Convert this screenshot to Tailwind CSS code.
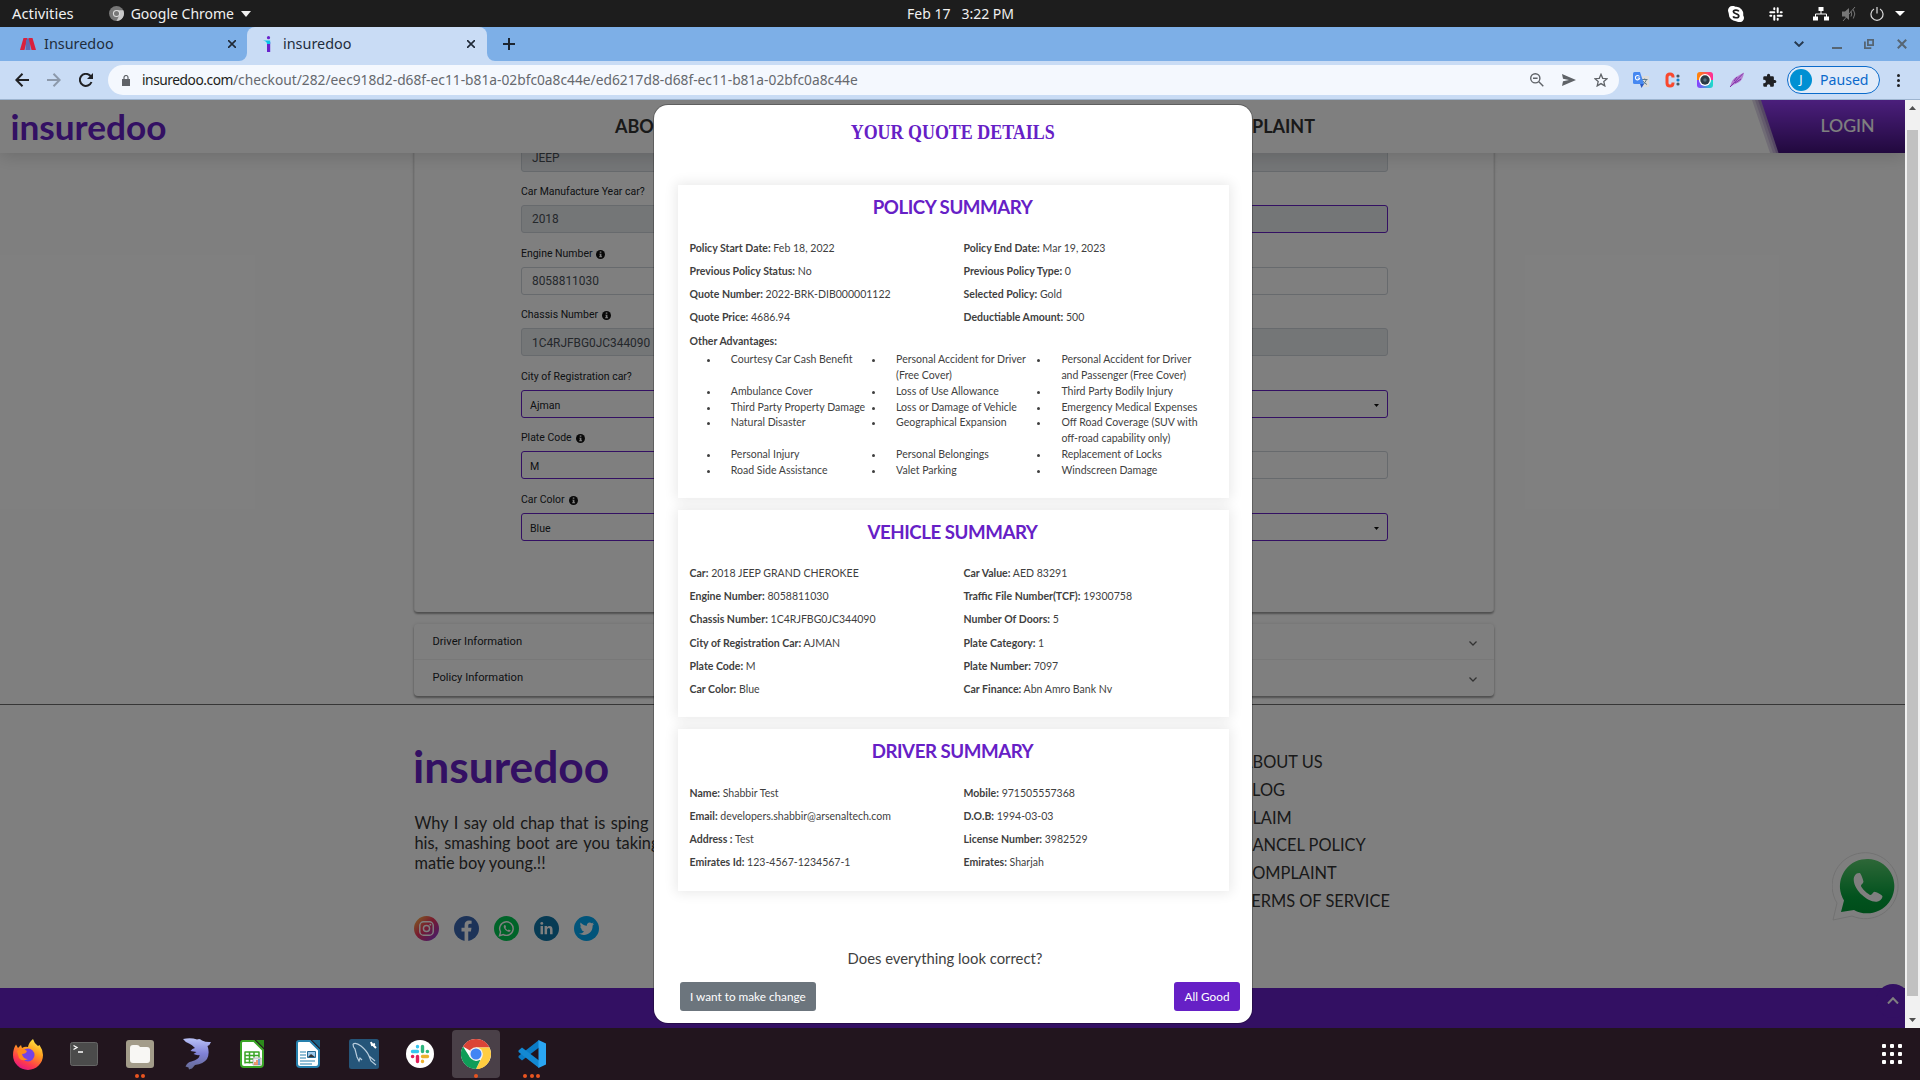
<!DOCTYPE html>
<html lang="en">
<head>
<meta charset="utf-8">
<title>insuredoo</title>
<script src="https://cdn.jsdelivr.net/npm/@tailwindcss/browser@4"></script>
</head>
<body class="flex h-[1080px] w-[1920px] flex-col overflow-hidden bg-[#22151e] font-['Noto_Sans',sans-serif]">

<svg class="hidden">
  <symbol id="info" viewBox="0 0 16 16"><circle cx="8" cy="8" r="8" fill="#111"/><path d="M6.700 2.500h2.800v2.400H6.700zM6 6.500h3.600v4.800h1.200v1.700H5.600v-1.700h1.200V8.200H6z" fill="#fff"/></symbol>
  <symbol id="chrome" viewBox="0 0 48 48"><circle cx="24" cy="24" r="24" fill="#fff"/><path d="M24 24 3.200 12A24 24 0 0 1 44.800 12L45.500 13.500H24z" fill="#db4437"/><path d="M24 13.500h21.600A24 24 0 0 1 24 48l9.500-19z" fill="#ffcd40"/><path d="M3.200 12 14.500 29.500 24 34.500l7 -1L24 48A24 24 0 0 1 3.200 12z" fill="#0f9d58"/><circle cx="24" cy="24" r="11" fill="#f1f1f1"/><circle cx="24" cy="24" r="8.800" fill="#4285f4"/></symbol>
  <symbol id="wa" viewBox="0 0 24 24"><path d="M6.600 3.100c-.9.200-2.400 1.600-2.300 4 .1 3.300 2.600 6.800 5 9 2.400 2.300 6.300 4.500 9.200 3.900 1.600-.4 2.900-1.900 2.900-3.200 0-.7-4-2.700-4.700-2.700-.9 0-1.600 2-2.400 2-1 0-5.700-4.200-5.700-5.500 0-.7 1.500-1.500 1.500-2.400 0-.6-1.500-5.200-2.300-5.200z"/></symbol>
</svg>

<!-- Desktop panel -->
<div class="flex h-[27px] shrink-0 items-center bg-[#1d1d1d] text-[14px] leading-none text-[#f0f0f0]">
  <div class="flex w-[907px] items-center pl-3">
    <span class="text-[14.800px]">Activities</span>
    <svg class="ml-[35px] h-[15px] w-[15px]" viewBox="0 0 48 48"><circle cx="24" cy="24" r="24" fill="#777"/><path d="M24 13.500h21.600A24 24 0 0 1 24 48l9.500-19z" fill="#c8c8c8"/><circle cx="24" cy="24" r="11.500" fill="#ddd"/><circle cx="24" cy="24" r="8" fill="#777"/></svg>
    <span class="ml-[7px]">Google Chrome</span>
    <svg class="ml-[7px] h-[6px] w-[10px]" viewBox="0 0 10 6"><path d="M0 0h10L5 6z" fill="#f0f0f0"/></svg>
  </div>
  <div class="flex w-[107px] justify-between"><span>Feb 17</span><span>3:22 PM</span></div>
  <div class="flex flex-1 items-center justify-end">
    <svg class="mr-[25px] h-4 w-4" viewBox="0 0 16 16"><path d="M4.500 0C7 0 7 .8 8.500.8A7.200 7.200 0 0 1 15.200 9c0 1 .8 1.500.8 3a4 4 0 0 1-4.500 4C9.500 16 9 15.200 8 15.200A7.200 7.200 0 0 1 .8 8C.8 6.500 0 6 0 4.300A4.300 4.300 0 0 1 4.500 0z" fill="#fff"/><path d="M10.800 5.300C10 3.700 5.400 3.600 5.400 5.800c0 2.400 5.400 1.500 5.400 4.100 0 2.400-5 2.300-5.700.5" fill="none" stroke="#1d1d1d" stroke-width="1.700"/></svg>
    <svg class="mr-[30px] h-[14px] w-[14px]" viewBox="0 0 14 14" fill="none" stroke="#fff" stroke-width="2" stroke-linecap="round"><path d="M1.300 5.300h4M5.300 1.300v1M8.700 1.300v4M11.700 5.300h1M8.700 8.700h4M8.700 11.700v1M5.300 8.700v4M1.300 8.700h1"/></svg>
    <svg class="mr-[13px] h-[14px] w-4" viewBox="0 0 16 14"><path d="M5.500 0h5v4h-5zM0 9.500h5v4H0zM11 9.500h5v4h-5z" fill="#fff"/><path d="M8 4v3M2.500 10V7h11v3" fill="none" stroke="#fff"/></svg>
    <svg class="mr-[13px] h-[14px] w-[15px]" viewBox="0 0 15 14"><path d="M0 4.500h3L7 1v12L3 9.500H0z" fill="#777"/><path d="M9 4.500q1.500 2.500 0 5M11.300 2.500q3 4.500 0 9M1 14 13 0" fill="none" stroke="#777"/></svg>
    <svg class="mr-[11px] h-[14px] w-[14px]" viewBox="0 0 14 14" fill="none" stroke="#ddd" stroke-width="1.200"><path d="M4 2.100a6 6 0 1 0 6 0M7 0v6.500"/></svg>
    <svg class="mr-[15px] h-[5px] w-[10px]" viewBox="0 0 10 5"><path d="M0 0h10L5 5z" fill="#fff"/></svg>
  </div>
</div>

<!-- Browser tabs -->
<div class="flex h-[34px] shrink-0 bg-[#7dafe7] text-[14.400px] text-[#1f2d3d]">
  <div class="flex w-[247px] items-center pl-5">
    <svg class="h-3 w-4" viewBox="0 0 16 12"><path d="M3.500 0h4L4.500 12H0z" fill="#d9203c"/><path d="M6 2.500 8 0l2 2.500L10.500 12H5.500z" fill="#5a6db5"/><path d="M8.500 0h4L16 12h-4.500z" fill="#d9203c"/></svg>
    <span class="ml-2 flex-1">Insuredoo</span>
    <svg class="mr-[11px] h-2 w-2" viewBox="0 0 8 8"><path d="m0 0 8 8M8 0 0 8" stroke="#1f2937" stroke-width="1.600"/></svg>
  </div>
  <div class="relative flex w-60 items-center rounded-t-lg bg-[#c9dcf5] pl-4">
    <svg class="absolute bottom-0 -left-2 h-2 w-2" viewBox="0 0 8 8"><path d="M8 0v8H0a8 8 0 0 0 8-8z" fill="#c9dcf5"/></svg>
    <svg class="absolute -right-2 bottom-0 h-2 w-2" viewBox="0 0 8 8"><path d="M0 0v8h8a8 8 0 0 1-8-8z" fill="#c9dcf5"/></svg>
    <svg class="h-4 w-[8px]" viewBox="0 0 8 16"><circle cx="5.500" cy="1.700" r="1.600" fill="#6a22cc"/><path d="M4 6h3.200v10H4z" fill="#6a22cc"/><path d="M0 4.500h7.200V8H4Q4 5 0 4.500z" fill="#0cc5e8"/></svg>
    <span class="ml-3 flex-1">insuredoo</span>
    <svg class="mr-3 h-2 w-2" viewBox="0 0 8 8"><path d="m0 0 8 8M8 0 0 8" stroke="#1f2937" stroke-width="1.600"/></svg>
  </div>
  <div class="flex flex-1 items-center pl-4">
    <svg class="h-3 w-3" viewBox="0 0 12 12"><path d="M6 0v12M0 6h12" stroke="#1c2530" stroke-width="2"/></svg>
    <svg class="mr-[28px] ml-auto h-[6px] w-[10px]" viewBox="0 0 10 6"><path d="m.7.7 4.300 4.200L9.300.7" fill="none" stroke="#26384d" stroke-width="1.900"/></svg>
    <div class="mt-2 mr-[22px] h-[2px] w-[10px] bg-[#566573]"></div>
    <svg class="mr-[23px] h-[10px] w-[10px]" viewBox="0 0 10 10" fill="none" stroke="#566573" stroke-width="1.800"><path d="M3.900.9h5.200v5.200H3.900zM.9 2.500v6.600h6.400"/></svg>
    <svg class="mr-[13px] h-[10px] w-[10px]" viewBox="0 0 10 10"><path d="m.8.8 8.400 8.400M9.200.8.8 9.200" stroke="#566573" stroke-width="2"/></svg>
  </div>
</div>

<!-- Browser toolbar -->
<div class="flex h-[39px] shrink-0 items-center border-b border-[#9db4cf] bg-[#c9dcf5]">
  <div class="flex w-[108px] items-center pl-[6px]">
    <div class="flex w-8 justify-center"><svg class="h-[14px] w-[14px]" viewBox="0 0 14 14" fill="none" stroke="#202124" stroke-width="2"><path d="M14 7H1.500M7.500.8 1.300 7l6.200 6.200"/></svg></div>
    <div class="flex w-8 justify-center"><svg class="h-[14px] w-[14px]" viewBox="0 0 14 14" fill="none" stroke="#8c99ab" stroke-width="2"><path d="M0 7h12.500M6.500.8 12.700 7l-6.200 6.200"/></svg></div>
    <div class="flex w-8 justify-center"><svg class="h-[14px] w-[14px]" viewBox="0 0 14 14" fill="none" stroke="#202124" stroke-width="2"><path d="M12.500 9A6 6 0 1 1 11.300 2.800L12.500 4"/><path d="M14 0v6H8z" fill="#202124" stroke="none"/></svg></div>
  </div>
  <div class="flex h-[30px] w-[1511px] items-center rounded-full bg-[#f4f8fe] pr-[2px] pl-[14px]">
    <svg class="h-[11px] w-2" viewBox="0 0 8 11"><path d="M0 4h8v7H0z" fill="#5f6368"/><path d="M2 5V2.500a2 2 0 0 1 4 0V5" fill="none" stroke="#5f6368" stroke-width="1.200"/></svg>
    <div class="ml-3 flex-1 text-[13.770px] whitespace-nowrap text-[#66696e]"><span class="tracking-[-0.460px] text-[#1d1e20]">insuredoo.com</span><span>/checkout/282/eec918d2-d68f-ec11-b81a-02bfc0a8c44e/ed6217d8-d68f-ec11-b81a-02bfc0a8c44e</span></div>
    <div class="flex w-8 justify-center"><svg class="h-[14px] w-[14px]" viewBox="0 0 14 14" fill="none" stroke="#5f6368" stroke-width="1.400"><circle cx="5.300" cy="5.300" r="4.600"/><path d="M8.800 8.800 13.300 13.300M3 5.300h4.600"/></svg></div>
    <div class="flex w-8 justify-center"><svg class="h-3 w-[14px]" viewBox="0 0 14 12"><path d="M0 0 14 6 0 12l1-4.800L7 6 1 4.800z" fill="#5f6368"/></svg></div>
    <div class="flex w-8 justify-center"><svg class="h-[14px] w-[14px]" viewBox="0 0 14 14"><path d="m7 1.300 1.700 4 4.400.4-3.300 2.900 1 4.300L7 10.600l-3.800 2.300 1-4.300L.9 5.700l4.400-.4z" fill="none" stroke="#5f6368" stroke-width="1.300"/></svg></div>
  </div>
  <div class="flex flex-1 items-center pl-[6px]">
    <div class="flex w-8 justify-center"><svg class="h-4 w-4" viewBox="0 0 16 16"><path d="M6 4h10v11H9z" fill="#dcdcdc"/><path d="M9 7.500h5.500M11.700 6.500v1.200M13.500 7.500q-1 3.500-4 5M10 9q1.500 2.500 4 3.500" stroke="#607d8b" fill="none"/><path d="M0 1.500Q0 0 1.500 0H7l4 12H1.500Q0 12 0 10.500z" fill="#4688f1"/><path d="M7 12h4l-2.500 4z" fill="#2b59c3"/><path d="M6.800 6H4.600M6.500 4.500A2.200 2.200 0 1 0 6.800 6" stroke="#fff" stroke-width="1.100" fill="none"/></svg></div>
    <div class="flex w-8 justify-center"><svg class="h-4 w-4" viewBox="0 0 16 16"><path d="M8 5.500V5c0-4-6-4-6 0v6c0 4 6 4 6 0v-.5" stroke="#f9482e" stroke-width="3" fill="none"/><circle cx="13" cy="4" r="1.600" fill="#455a64"/><circle cx="13" cy="8" r="1.600" fill="#1182d0"/><circle cx="13" cy="12" r="1.600" fill="#455a64"/></svg></div>
    <div class="flex w-8 justify-center"><svg class="h-4 w-4" viewBox="0 0 16 16"><defs><linearGradient id="cam1" x2="1"><stop stop-color="#ff8a00"/><stop offset="1" stop-color="#ff2a9d"/></linearGradient><linearGradient id="cam2" x2="1"><stop stop-color="#8b3dff"/><stop offset="1" stop-color="#19e0c8"/></linearGradient></defs><path d="M0 8V3q0-3 3-3h10q3 0 3 3v5z" fill="url(#cam1)"/><path d="M0 8h16v5q0 3-3 3H3q-3 0-3-3z" fill="url(#cam2)"/><circle cx="8" cy="8" r="6" fill="#fff"/><circle cx="8" cy="8" r="4.700" fill="#2b3b45"/><circle cx="8" cy="8" r="1.700" fill="#567080"/></svg></div>
    <div class="flex w-8 justify-center"><svg class="h-4 w-4" viewBox="0 0 16 16"><path d="M1 15Q3 7 7 5l8-4.500Q14 8 9.500 10.500 5 12 1 15z" fill="#b57fd0"/><path d="M1 15 14 1.500M5 9l3-4M6 11l6-4" stroke="#7e2fa8" fill="none"/></svg></div>
    <div class="flex w-8 justify-center"><svg class="h-[15px] w-[15px]" viewBox="0 0 24 24"><path d="M20.500 11H19V7a2 2 0 0 0-2-2h-4V3.500a2.500 2.500 0 0 0-5 0V5H4a2 2 0 0 0-2 2v3.800h1.500a2.700 2.700 0 0 1 0 5.400H2V20a2 2 0 0 0 2 2h3.800v-1.500a2.700 2.700 0 0 1 5.400 0V22H17a2 2 0 0 0 2-2v-4h1.500a2.500 2.500 0 0 0 0-5z" fill="#202124"/></svg></div>
    <div class="ml-[2px] flex h-7 w-[93px] items-center rounded-full border border-[#0b6bcb] bg-[#e1ebf9] pl-[2px]">
      <div class="flex h-[22px] w-[22px] items-center justify-center rounded-full bg-[#0090d3] text-[12px] text-white">J</div>
      <span class="ml-2 text-[14.100px] text-[#0b69cb]">Paused</span>
    </div>
    <div class="ml-[17px] flex flex-col gap-[2px]"><i class="h-[3px] w-[3px] rounded-full bg-[#202124]"></i><i class="h-[3px] w-[3px] rounded-full bg-[#202124]"></i><i class="h-[3px] w-[3px] rounded-full bg-[#202124]"></i></div>
  </div>
</div>

<!-- Web page -->
<div class="flex h-[928px] shrink-0">
  <div class="relative flex w-[1905px] flex-col overflow-hidden bg-white font-['Lato',sans-serif]">
    <header class="relative z-10 flex h-[53px] shrink-0 items-center bg-white shadow-[0_3px_18px_rgba(0,0,0,0.16)]">
      <div class="w-[615px] shrink-0 pb-[2px] pl-[10.500px] text-[35.200px] leading-[50px] font-bold text-[#6620c6]">insuredoo</div>
      <nav class="flex w-[700px] shrink-0 justify-between text-[18px] font-bold text-[#333]"><span>ABOUT US</span><span>COMPLAINT</span></nav>
      <div class="relative ml-auto flex h-full w-[153px] items-center justify-center pl-[38px] text-[17.700px] font-medium text-white">
        <svg class="absolute inset-0 h-[53px] w-[153px]" viewBox="0 0 153 53"><defs><linearGradient id="lg" x2="0" y2="1"><stop stop-color="#963ef8"/><stop offset="1" stop-color="#43127c"/></linearGradient></defs><path d="M0 0h153v53H18z" fill="#6a3a9a" opacity=".2"/><path d="M3 0h150v53H21z" fill="#6a3a9a" opacity=".2"/><path d="M6 0h147v53H24z" fill="#6a3a9a" opacity=".3"/><path d="M9 0h144v53H26.500z" fill="url(#lg)"/></svg>
        <span class="relative">LOGIN</span>
      </div>
    </header>

    <main class="flex flex-col items-center pl-[3px]">
      <section class="-mt-[9.500px] h-[468.500px] w-[1080px] rounded-b border-x border-[#f0f0f0] pr-[105px] pl-[106px] font-['Roboto',sans-serif] text-[11.900px] leading-4 text-[#495057] shadow-[0_2px_2px_rgba(0,0,0,0.35),0_0_4px_rgba(0,0,0,0.12)]">
        <div class="grid grid-cols-2 gap-x-[30px]">
          <div>
            <div class="flex h-7 items-center rounded-[3px] border border-[#ced4da] bg-[#e9ecef] px-[10px]">JEEP</div>
            <div class="h-[33.550px] pt-3 text-[10.480px] text-[#212529]">Car Manufacture Year car?</div>
            <div class="flex h-7 items-center rounded-[3px] border border-[#ced4da] bg-[#e9ecef] px-[10px]">2018</div>
            <div class="flex h-[33.550px] gap-1 pt-[12.500px] text-[10.480px] text-[#212529]">Engine Number <svg class="mt-[4px] h-[9px] w-[9px]"><use href="#info"/></svg></div>
            <div class="flex h-7 items-center rounded-[3px] border border-[#ced4da] px-[10px]">8058811030</div>
            <div class="flex h-[33.550px] gap-1 pt-3 text-[10.480px] text-[#212529]">Chassis Number <svg class="mt-[4px] h-[9px] w-[9px]"><use href="#info"/></svg></div>
            <div class="flex h-7 items-center rounded-[3px] border border-[#ced4da] bg-[#e9ecef] px-[10px] pt-px">1C4RJFBG0JC344090</div>
            <div class="h-[33.550px] pt-[12.500px] text-[10.480px] text-[#212529]">City of Registration car?</div>
            <div class="flex h-7 items-center rounded-[3px] border border-[#6620c6] px-2 pt-1 text-[10.600px] text-[#212529]">Ajman</div>
            <div class="flex h-[33.550px] gap-1 pt-3 text-[10.480px] text-[#212529]">Plate Code <svg class="mt-[4px] h-[9px] w-[9px]"><use href="#info"/></svg></div>
            <div class="flex h-7 items-center rounded-[3px] border border-[#6620c6] px-2 pt-[3px] text-[10.600px] text-[#212529]">M</div>
            <div class="flex h-[33.550px] gap-1 pt-[12.500px] text-[10.480px] text-[#212529]">Car Color <svg class="mt-[4px] h-[9px] w-[9px]"><use href="#info"/></svg></div>
            <div class="flex h-7 items-center rounded-[3px] border border-[#6620c6] px-2 pt-1 text-[10.600px] text-[#212529]">Blue</div>
          </div>
          <div class="flex flex-col gap-[33.550px]">
            <div class="h-7 rounded-[3px] border border-[#ced4da] bg-[#e9ecef]"></div>
            <div class="h-7 rounded-[3px] border border-[#6620c6] bg-[#e9ecef]"></div>
            <div class="h-7 rounded-[3px] border border-[#ced4da]"></div>
            <div class="h-7 rounded-[3px] border border-[#ced4da] bg-[#e9ecef]"></div>
            <div class="flex h-7 items-center justify-end rounded-[3px] border border-[#6620c6] pt-[3px] pr-2"><svg class="h-[3px] w-[5px]" viewBox="0 0 5 3"><path d="M0 0h5L2.500 3z" fill="#111"/></svg></div>
            <div class="h-7 rounded-[3px] border border-[#ced4da]"></div>
            <div class="flex h-7 items-center justify-end rounded-[3px] border border-[#6620c6] pt-[3px] pr-2"><svg class="h-[3px] w-[5px]" viewBox="0 0 5 3"><path d="M0 0h5L2.500 3z" fill="#111"/></svg></div>
          </div>
        </div>
      </section>
      <section class="mt-3 w-[1080px] rounded font-['Roboto',sans-serif] text-[11.170px] text-[#212529] shadow-[0_2px_2px_rgba(0,0,0,0.35),0_0_4px_rgba(0,0,0,0.12)]">
        <div class="flex h-9 items-center justify-between border-b border-[#f0f0f0] pt-[1px] pr-[17px] pl-[18.500px]">Driver Information<svg class="mt-[2px] h-[5px] w-2" viewBox="0 0 8 5"><path d="m.5.5 3.500 3.500L7.500.5" fill="none" stroke="#666" stroke-width="1.300"/></svg></div>
        <div class="flex h-9 items-center justify-between pt-[1px] pr-[17px] pl-[18.500px]">Policy Information<svg class="mt-[2px] h-[5px] w-2" viewBox="0 0 8 5"><path d="m.5.5 3.500 3.500L7.500.5" fill="none" stroke="#666" stroke-width="1.300"/></svg></div>
      </section>
    </main>

    <footer class="mt-2 flex h-[324px] shrink-0 flex-col border-t border-[#6c6c6c]">
      <div class="flex flex-1 pl-[413px] text-[#333]">
        <div class="w-[828.500px] pt-[35px]">
          <div class="text-[44.300px] leading-[51px] font-bold text-[#6620c6]">insuredoo</div>
          <div class="mt-[22px] ml-[1.500px] text-[16.350px] leading-5">
            <div class="w-[234px] [text-align-last:justify]">Why I say old chap that is sping</div>
            <div class="w-[245px] [text-align-last:justify]">his, smashing boot are you taking</div>
            <div>matie boy young.!!</div>
          </div>
          <div class="mt-[42.500px] ml-[1px] flex gap-[14.900px]">
            <svg class="h-[25px] w-[25px]" viewBox="0 0 26 26"><defs><linearGradient id="ig" x2="1" y2="1"><stop stop-color="#ffc83c"/><stop offset=".45" stop-color="#f0385f"/><stop offset="1" stop-color="#7a35e8"/></linearGradient></defs><circle cx="13" cy="13" r="13" fill="url(#ig)"/><rect x="6" y="6" width="14" height="14" rx="4" fill="none" stroke="#fff" stroke-width="1.500"/><circle cx="13" cy="13" r="3.200" fill="none" stroke="#fff" stroke-width="1.500"/><circle cx="17" cy="9" r="1" fill="#fff"/></svg>
            <svg class="h-[25px] w-[25px]" viewBox="0 0 26 26"><circle cx="13" cy="13" r="13" fill="#3b67b0"/><path d="M11 26V16H7.800v-3.800H11V9.500C11 6.300 12.900 4.700 15.600 4.700q1.500 0 2.700.2v3.200h-1.600c-1.400 0-1.900.9-1.900 1.900v2.200h3.400l-.6 3.800h-2.800v10z" fill="#fff"/></svg>
            <svg class="h-[25px] w-[25px]" viewBox="0 0 26 26"><circle cx="13" cy="13" r="13" fill="#00c853"/><path d="m5.800 20.500 1-4A7 7 0 1 1 9.700 19.300z" fill="none" stroke="#fff" stroke-width="1.500"/><g transform="translate(8.300 8) scale(.42)" fill="#fff"><use href="#wa" width="24" height="24"/></g></svg>
            <svg class="h-[25px] w-[25px]" viewBox="0 0 26 26"><circle cx="13" cy="13" r="13" fill="#0e76a8"/><path d="M6.800 10.500h2.600V19H6.800zM11 10.500h2.500v1.200q1-1.400 2.600-1.400c2.500 0 3.200 1.600 3.200 4V19h-2.600v-4.300c0-1.200-.2-2.200-1.400-2.200s-1.700 1-1.700 2.200V19H11z" fill="#fff"/><circle cx="8.100" cy="7.700" r="1.500" fill="#fff"/></svg>
            <svg class="h-[25px] w-[25px]" viewBox="0 0 26 26"><circle cx="13" cy="13" r="13" fill="#03a9f4"/><path d="M5 18.300c6 3.500 14.500.6 14.400-8.400l1.600-1.800-1.900.5 1.300-1.800-2 .8c-2-2-5.400-.6-5 2.500-2.700 0-5-1.400-6.500-3.300-.9 1.600-.4 3.200.9 4.200l-1.300-.4c0 1.500 1 2.800 2.500 3.200l-1.400.1c.4 1.200 1.500 2 2.800 2.100-1.300 1.700-3.200 2.300-5.400 2.300z" fill="#fff"/></svg>
          </div>
        </div>
        <nav class="flex flex-col pt-[43px] text-[16.400px] leading-[27.800px]"><span>ABOUT US</span><span>BLOG</span><span>CLAIM</span><span>CANCEL POLICY</span><span>COMPLAINT</span><span>TERMS OF SERVICE</span></nav>
      </div>
      <div class="h-10 bg-[#6620c6]"></div>
    </footer>

    <!-- Floating shortcuts -->
    <svg class="absolute top-[752px] left-[1832px] h-[70px] w-[70px]" viewBox="0 0 70 70"><path d="M1 68 5 51A33 33 0 1 1 20 64z" fill="#fff" stroke="#e4e4e4"/><defs><linearGradient id="wg" x2="0" y2="1"><stop stop-color="#5ccf70"/><stop offset=".7" stop-color="#04a53c"/><stop offset="1" stop-color="#009a34"/></linearGradient></defs><path d="m9 60 3-11.500A27.200 27.200 0 1 1 22 58z" fill="url(#wg)"/><g transform="translate(14.500 16) scale(1.680)" fill="#fff"><use href="#wa" width="24" height="24"/></g></svg>
    <div class="absolute top-[884px] left-[1876px] flex h-[34px] w-[34px] justify-center rounded-full bg-[#6620c6] pt-[13px]"><svg class="h-[7px] w-3" viewBox="0 0 12 7"><path d="M1 6.500 6 1.200l5 5.300" fill="none" stroke="#fff" stroke-width="2"/></svg></div>

    <!-- Quote dialog -->
    <div class="absolute inset-0 z-20 bg-black/50">
      <div class="absolute top-[5px] left-[654px] flex h-[918px] w-[598px] flex-col rounded-[14px] bg-white pr-[23px] pl-6 text-[10.540px] text-[#3f3f3f] shadow-[0_0_0_1px_rgba(0,0,0,0.25)]">
        <h1 class="h-20 origin-center scale-x-[0.815] pt-[13px] pr-[2px] text-center font-['Liberation_Serif',serif] text-[22px] leading-7 font-bold text-[#6620c6]">YOUR QUOTE DETAILS</h1>
        <div class="flex flex-col gap-[11.500px]">
          <section class="h-[313px] bg-white pt-[11px] shadow-[0_0_12px_2px_rgba(0,0,0,0.09)]">
            <h2 class="h-[40.700px] pr-[2px] text-center text-[18.700px] tracking-[-0.460px] leading-[23px] font-bold text-[#6620c6]">POLICY SUMMARY</h2>
            <div class="grid grid-cols-[274px_1fr] leading-[23.100px] *:px-[11.500px]">
              <p><b>Policy Start Date:</b> Feb 18, 2022</p><p><b>Policy End Date:</b> Mar 19, 2023</p>
              <p><b>Previous Policy Status:</b> No</p><p><b>Previous Policy Type:</b> 0</p>
              <p><b>Quote Number:</b> 2022-BRK-DIB000001122</p><p><b>Selected Policy:</b> Gold</p>
              <p><b>Quote Price:</b> 4686.94</p><p><b>Deductiable Amount:</b> 500</p>
            </div>
            <p class="h-[23px] px-[11.500px] leading-6 font-bold">Other Advantages:</p>
            <ul class="grid grid-cols-[repeat(3,165.300px)] pl-[28.800px] leading-[15.850px] *:flex *:before:mt-[7px] *:before:mr-[21px] *:before:h-[3px] *:before:w-[3px] *:before:shrink-0 *:before:rounded-full *:before:bg-[#3f3f3f]">
              <li>Courtesy Car Cash Benefit</li><li>Personal Accident for Driver (Free Cover)</li><li>Personal Accident for Driver and Passenger (Free Cover)</li>
              <li>Ambulance Cover</li><li>Loss of Use Allowance</li><li>Third Party Bodily Injury</li>
              <li>Third Party Property Damage</li><li>Loss or Damage of Vehicle</li><li>Emergency Medical Expenses</li>
              <li>Natural Disaster</li><li>Geographical Expansion</li><li>Off Road Coverage (SUV with off-road capability only)</li>
              <li>Personal Injury</li><li>Personal Belongings</li><li>Replacement of Locks</li>
              <li>Road Side Assistance</li><li>Valet Parking</li><li>Windscreen Damage</li>
            </ul>
          </section>
          <section class="h-[207.800px] bg-white pt-[11px] shadow-[0_0_12px_2px_rgba(0,0,0,0.09)]">
            <h2 class="h-[41.500px] pr-[2px] text-center text-[18.700px] tracking-[-0.460px] leading-[23px] font-bold text-[#6620c6]">VEHICLE SUMMARY</h2>
            <div class="grid grid-cols-[274px_1fr] leading-[23.200px] *:px-[11.500px]">
              <p><b>Car:</b> 2018 JEEP GRAND CHEROKEE</p><p><b>Car Value:</b> AED 83291</p>
              <p><b>Engine Number:</b> 8058811030</p><p><b>Traffic File Number(TCF):</b> 19300758</p>
              <p><b>Chassis Number:</b> 1C4RJFBG0JC344090</p><p><b>Number Of Doors:</b> 5</p>
              <p><b>City of Registration Car:</b> AJMAN</p><p><b>Plate Category:</b> 1</p>
              <p><b>Plate Code:</b> M</p><p><b>Plate Number:</b> 7097</p>
              <p><b>Car Color:</b> Blue</p><p><b>Car Finance:</b> Abn Amro Bank Nv</p>
            </div>
          </section>
          <section class="h-[162px] bg-white pt-[11px] shadow-[0_0_12px_2px_rgba(0,0,0,0.09)]">
            <h2 class="h-[42px] pr-[2px] text-center text-[18.700px] tracking-[-0.460px] leading-[23px] font-bold text-[#6620c6]">DRIVER SUMMARY</h2>
            <div class="grid grid-cols-[274px_1fr] leading-[23.200px] *:px-[11.500px]">
              <p><b>Name:</b> Shabbir Test</p><p><b>Mobile:</b> 971505557368</p>
              <p><b>Email:</b> developers.shabbir@arsenaltech.com</p><p><b>D.O.B:</b> 1994-03-03</p>
              <p><b>Address :</b> Test</p><p><b>License Number:</b> 3982529</p>
              <p><b>Emirates Id:</b> 123-4567-1234567-1</p><p><b>Emirates:</b> Sharjah</p>
            </div>
          </section>
        </div>
        <p class="mt-[55.500px] mr-[17px] text-center text-[14.830px] leading-6">Does everything look correct?</p>
        <div class="mt-[12px] -mr-[11px] ml-[2px] flex justify-between text-[11.760px] leading-[29px] text-white">
          <div class="rounded-[3px] bg-[#6c757d] px-[10px]">I want to make change</div>
          <div class="rounded-[3px] bg-[#6620c6] px-[10.500px]">All Good</div>
        </div>
      </div>
    </div>
  </div>
  <!-- Scrollbar -->
  <div class="flex w-[15px] flex-col items-center bg-[#f1f1f1] py-[6px]">
    <svg class="h-1 w-[7px]" viewBox="0 0 7 4"><path d="M0 4h7L3.500 0z" fill="#505050"/></svg>
    <div class="mt-5 h-[866px] w-[11px] bg-[#c1c1c1]"></div>
    <svg class="mt-auto h-1 w-[7px]" viewBox="0 0 7 4"><path d="M0 0h7L3.500 4z" fill="#505050"/></svg>
  </div>
</div>

<!-- Dock -->
<div class="flex h-[52px] shrink-0 items-center bg-[#22151e]">
  <div class="flex w-14 justify-center"><svg class="h-8 w-8" viewBox="0 0 32 32"><defs><linearGradient id="ff" x1=".8" y1="0" x2=".3" y2="1"><stop stop-color="#fff044"/><stop offset=".4" stop-color="#ff9a1f"/><stop offset=".75" stop-color="#ff3d4a"/><stop offset="1" stop-color="#e31587"/></linearGradient></defs><path d="M4 6.500 6 10l3-3 1 3q3-2 6-1 1-5 5-8 1 4 5 7l1.500-1Q31 12 31 17A15 15 0 0 1 1 17Q1 11 4 6.500z" fill="url(#ff)"/><circle cx="16" cy="17" r="6.500" fill="#7542e5"/><path d="M5 13q5-4 10 0-1 3-5 3 1 5 6 5-6 3-9-1z" fill="#ff8a1c"/></svg></div>
  <div class="flex w-14 justify-center"><svg class="h-6 w-7" viewBox="0 0 28 24"><rect x=".5" y=".5" width="27" height="23" rx="2" fill="#4b4b4b" stroke="#666"/><path d="m3.500 3.500 3.500 2-3.500 2M8 10h5" fill="none" stroke="#fff" stroke-width="1.300"/></svg></div>
  <div class="relative flex w-14 justify-center"><svg class="h-7 w-7" viewBox="0 0 28 28"><rect width="28" height="28" rx="3" fill="#a39c8a"/><path d="M4 8q0-3 3-3h4q2 0 3 2h7q3 0 3 3v10q0 3-3 3H7q-3 0-3-3z" fill="#f8f7f4"/></svg><div class="absolute -bottom-[10px] flex gap-[2px]"><i class="h-1 w-1 rounded-full bg-[#e95420]"></i><i class="h-1 w-1 rounded-full bg-[#e95420]"></i></div></div>
  <div class="flex w-[58px] justify-center"><svg class="h-8 w-7" viewBox="0 0 28 32"><defs><linearGradient id="dp" x2="0" y2="1"><stop stop-color="#b9c1f7"/><stop offset=".5" stop-color="#7f80d6"/><stop offset="1" stop-color="#656a92"/></linearGradient></defs><path d="M0 1q8-1.500 14 .5Q17 0 19 2.500q4 2 9 1.500-1 3-3.500 4 2.500 7-.5 13-3.500 5-12 6l-3 3.500q-2 .5-3 1l-.5-2-3-1q2-4.500 6-5 8.500-2.500 8-6.500-3 .5-6-1l3-2-6-1q1.500-2.500 4.500-3Q9 6.500 6 5.500 2 4 0 1z" fill="url(#dp)"/></svg></div>
  <div class="flex w-[52px] justify-center"><svg class="h-7 w-6" viewBox="0 0 24 28"><path d="M3 1h11l9 9v14q0 3-3 3H4q-3 0-3-3V3q0-2 2-2z" fill="#fff" stroke="#3aa526" stroke-width="2"/><path d="M16 0h8v8z" fill="#2b8a1b"/><path d="M5 12h14M5 15.500h14M5 19h8M5 22.500h8M5 11.500v12M9.500 11.500v12M14 11.500v6M19 11.500v6" stroke="#3aa526" stroke-width="1.500"/><path d="M13 18h8v7h-8z" fill="#eee" stroke="#888" stroke-width=".6"/><path d="M15 22v3M17 20v5" stroke="#ee6b2f" stroke-width="1.300"/><path d="M19 19v6" stroke="#2c80c9" stroke-width="1.300"/></svg></div>
  <div class="flex w-[60px] justify-center"><svg class="h-7 w-6" viewBox="0 0 24 28"><path d="M3 1h11l9 9v14q0 3-3 3H4q-3 0-3-3V3q0-2 2-2z" fill="#fff" stroke="#2680ad" stroke-width="2"/><path d="M16 0h8v8z" fill="#1b6389"/><path d="M4 12h6M4 15h6M4 18h6M4 21h15M4 24h12" stroke="#2680ad" stroke-width="1.200"/><path d="M11.500 11.500h8v6h-8z" fill="#9dc8ea" stroke="#246b94"/><path d="m12 17 3-3 4 3z" fill="#333"/></svg></div>
  <div class="flex w-[52px] justify-center"><svg class="h-[30px] w-[30px]" viewBox="0 0 30 30"><rect width="30" height="30" rx="2.500" fill="#255579"/><path d="M4 5q3-2 8 2 6 5 8 10l6 5M4 5q0 3 2 5l2 8 2 4 1-3 2 2M20 17l2 5 5 4" fill="none" stroke="#b9cddd" stroke-width="1.200"/><path d="m22 3 1 3 3-1M23 5l4 4" stroke="#fff" stroke-width="2" fill="none"/></svg></div>
  <div class="flex w-[59px] justify-center"><svg class="h-7 w-7" viewBox="0 0 28 28"><circle cx="14" cy="14" r="14" fill="#fff"/><g fill="none" stroke-width="3.400" stroke-linecap="round"><path d="M6.500 11.500h5M11.500 6.500v.2" stroke="#36c5f0"/><path d="M16.500 6.500v5M21.500 11.500h-.2" stroke="#2eb67d"/><path d="M16.500 16.500h5M16.500 21.500v-.2" stroke="#ecb22e"/><path d="M11.500 16.500v5M6.500 16.500h.2" stroke="#e01e5a"/></g></svg></div>
  <div class="relative mx-[3px] flex h-12 w-12 items-center justify-center rounded bg-[#4a4048]"><svg class="h-[30px] w-[30px]"><use href="#chrome"/></svg><i class="absolute bottom-0 h-1 w-1 rounded-full bg-[#e95420]"></i></div>
  <div class="relative flex w-[57px] justify-center"><svg class="h-7 w-7" viewBox="0 0 28 28"><path d="M21 0v7.500L4 20.500l-3.500-3V16z" fill="#0a7bc6"/><path d="M21 28v-7.500L4 7.500l-3.500 3V12z" fill="#1389d3"/><path d="m20.500 0 7.500 3.500v21L20.500 28z" fill="#2aa5f2"/></svg><div class="absolute -bottom-[10px] flex gap-[2.500px]"><i class="h-1 w-1 rounded-full bg-[#e95420]"></i><i class="h-1 w-1 rounded-full bg-[#e95420]"></i><i class="h-1 w-1 rounded-full bg-[#e95420]"></i></div></div>
  <div class="mr-[18px] ml-auto grid grid-cols-3 gap-x-1 gap-y-1"><i class="h-1 w-1 rounded-[1px] bg-white"></i><i class="h-1 w-1 rounded-[1px] bg-white"></i><i class="h-1 w-1 rounded-[1px] bg-white"></i><i class="h-1 w-1 rounded-[1px] bg-white"></i><i class="h-1 w-1 rounded-[1px] bg-white"></i><i class="h-1 w-1 rounded-[1px] bg-white"></i><i class="h-1 w-1 rounded-[1px] bg-white"></i><i class="h-1 w-1 rounded-[1px] bg-white"></i><i class="h-1 w-1 rounded-[1px] bg-white"></i></div>
</div>
</body>
</html>
